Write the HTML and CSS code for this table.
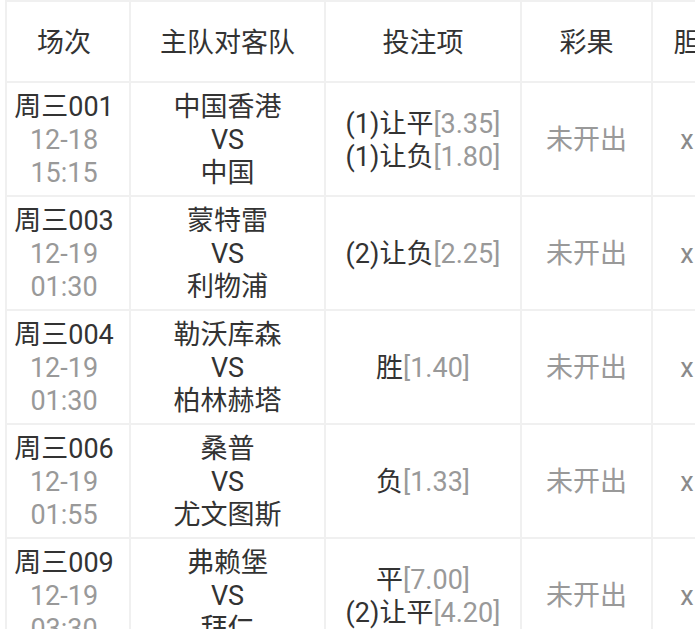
FILE: index.html
```html
<!DOCTYPE html>
<html lang="zh">
<head>
<meta charset="utf-8">
<link rel="stylesheet" href="styles.css">
</head>
<body>
<div class="wrap">
<table class="grid">
  <colgroup>
    <col class="c-no"><col class="c-team"><col class="c-bet"><col class="c-res"><col class="c-dan">
  </colgroup>
  <thead>
    <tr class="head"><th class="first">场次</th><th>主队对客队</th><th>投注项</th><th>彩果</th><th>胆</th></tr>
  </thead>
  <tbody>
    <tr>
      <td class="first"><div>周三001</div><div class="dim">12-18</div><div class="dim">15:15</div></td>
      <td><div>中国香港</div><div>VS</div><div>中国</div></td>
      <td><div>(1)让平<span class="dim">[3.35]</span></div><div>(1)让负<span class="dim">[1.80]</span></div></td>
      <td class="dim">未开出</td>
      <td class="x">x</td>
    </tr>
    <tr>
      <td class="first"><div>周三003</div><div class="dim">12-19</div><div class="dim">01:30</div></td>
      <td><div>蒙特雷</div><div>VS</div><div>利物浦</div></td>
      <td><div>(2)让负<span class="dim">[2.25]</span></div></td>
      <td class="dim">未开出</td>
      <td class="x">x</td>
    </tr>
    <tr>
      <td class="first"><div>周三004</div><div class="dim">12-19</div><div class="dim">01:30</div></td>
      <td><div>勒沃库森</div><div>VS</div><div>柏林赫塔</div></td>
      <td><div>胜<span class="dim">[1.40]</span></div></td>
      <td class="dim">未开出</td>
      <td class="x">x</td>
    </tr>
    <tr>
      <td class="first"><div>周三006</div><div class="dim">12-19</div><div class="dim">01:55</div></td>
      <td><div>桑普</div><div>VS</div><div>尤文图斯</div></td>
      <td><div>负<span class="dim">[1.33]</span></div></td>
      <td class="dim">未开出</td>
      <td class="x">x</td>
    </tr>
    <tr>
      <td class="first"><div>周三009</div><div class="dim">12-19</div><div class="dim">03:30</div></td>
      <td><div>弗赖堡</div><div>VS</div><div>拜仁</div></td>
      <td><div>平<span class="dim">[7.00]</span></div><div>(2)让平<span class="dim">[4.20]</span></div></td>
      <td class="dim">未开出</td>
      <td class="x">x</td>
    </tr>
  </tbody>
</table>
</div>
</body>
</html>
```

FILE: styles.css
```css
html, body {
  margin: 0;
  padding: 0;
  background: #ffffff;
}
.wrap {
  width: 695px;
  height: 629px;
  overflow: hidden;
  padding-left: 5px;
  box-sizing: border-box;
}
.grid {
  border-collapse: collapse;
  table-layout: fixed;
  width: 716px;
  font-family: Roboto, "Noto Sans CJK SC", sans-serif;
  font-size: 27px;
  line-height: 33px;
  color: #333333;
}
.c-no { width: 124px; }
.c-team { width: 195px; }
.c-bet { width: 196px; }
.c-res { width: 131px; }
.c-dan { width: 70px; }
.grid th, .grid td {
  border: 2px solid #f0f0f0;
  text-align: center;
  vertical-align: middle;
  padding: 3px 0 0;
  white-space: nowrap;
}
.grid th.first, .grid td.first {
  padding-right: 8px;
}
.grid th {
  font-weight: normal;
  height: 76px;
}
.grid td {
  height: 109px;
}
.dim {
  color: #999999;
}
.x {
  color: #8a8a8a;
}
```
